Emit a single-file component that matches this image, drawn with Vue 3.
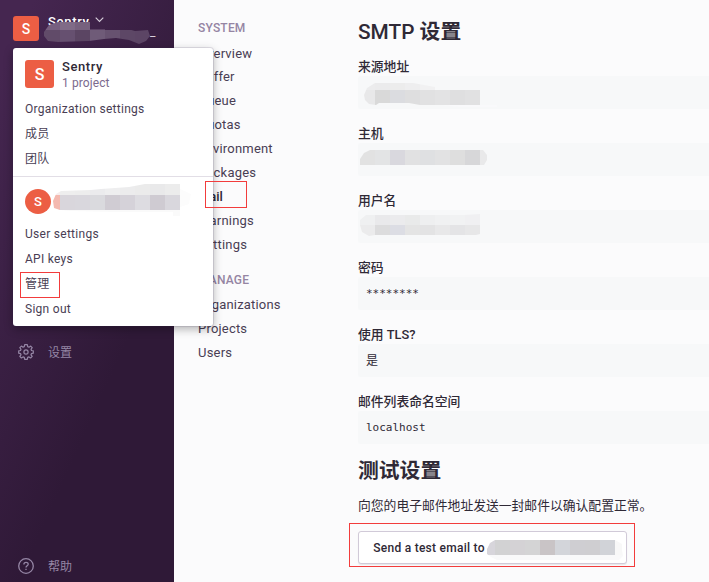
<script setup>
const system = ['Overview', 'Buffer', 'Queue', 'Quotas', 'Environment', 'Packages', 'Mail', 'Warnings', 'Settings']
const manage = ['Organizations', 'Projects', 'Users']

// Each mask: size, outline path, and mosaic cells as [x, y, width, height, fill]
const row = (y, h, x0, widths, fills) => {
  let x = x0
  return fills.map((f, i) => {
    const w = widths[i] ?? 15
    const cell = [x, y, w, h, f]
    x += w
    return cell
  })
}
const masks = {
  org: {
    w: 114, h: 24, d: 'M0 10L5 3L14 0H46V7H84L91 9L104 8L106 14L102 19L95 22L85 18L72 16L60 17L45 19L14 20L4 19L0 14Z',
    cells: [...row(0, 8, 0, [16], ['#775f80', '#806b87', '#77617e', '#5b4164']),
      ...row(8, 16, 0, [16], ['#614b69', '#665070', '#5b4563', '#6f5b78', '#675270', '#5d4766', '#5c4565'])]
  },
  user: {
    w: 140, h: 35, d: 'M0 17L3 10L8 7L38 6L48 5L76 3L92 0H127V5L138 10L136 20L127 23V32H120V28H62L18 27L7 26L1 24Z',
    cells: [...row(0, 11, 0, [7], ['#f7eded', '#eee', '#ededed', '#ebebed', '#eeeeef', '#ececed', '#ebebeb', '#e9e9ea', '#ececec', '#fcfcfc']),
      ...row(11, 15, 0, [7], ['#f4b9b0', '#d9d6dc', '#d9d7dd', '#dadade', '#d0ccd3', '#d5d2d9', '#dddce1', '#cfcbd2', '#d9d7dd', '#fcfcfc']),
      [0, 26, 140, 9, '#fafafa']]
  },
  from: {
    w: 134, h: 25, d: 'M0 12L3 5L11 0H49L71 4V7H116V22H133V24H96L78 22H56L45 20H15L12 22L5 21L1 17Z',
    cells: [...row(0, 7, 0, [11], ['#ececed', '#ebebec', '#ececec', '#eeeeef', '#f1f1f2', '#f2f2f3']),
      ...row(7, 15, 0, [11], ['#e8e8e9', '#d9d9d9', '#dbdce0', '#dededf', '#e1e1e2', '#e3e3e4', '#dfdfe0', '#e1e1e2', '#f8f8f9']),
      [0, 22, 134, 3, '#f9f9fb']]
  },
  host: {
    w: 127, h: 15, d: 'M0 15V9L4 3L10 0H123L127 5V10L124 15Z',
    cells: row(0, 15, 0, [15], ['#e2e2e2', '#e3e4e5', '#d9d8de', '#e1e1e2', '#dfe0e2', '#e2e2e3', '#dedede', '#d7d7d9', '#e9e9ea'])
  },
  name: {
    w: 120, h: 22, d: 'M0 11V6L6 1H104L120 0V20L116 21H15L9 22L2 18Z',
    cells: [...row(0, 11, 0, [15], ['#eff0f1', '#e9e9eb', '#ebebed', '#e9eaea', '#eeeff0', '#f0f1f2', '#f1f2f3', '#f0f0f2']),
      ...row(11, 11, 0, [15], ['#ebebec', '#dcdcdd', '#dcdde4', '#e4e4e4', '#e3e3e4', '#e8e8e9', '#e4e4e6', '#e7e7e8'])]
  },
  mail: {
    w: 136, h: 20, d: 'M0 9L3 3L8 0H128L135 4V10L136 16L132 20H10L4 17L0 14Z',
    cells: [...row(0, 15, 0, [8], ['#d7d5db', '#d2d2d3', '#d4d2d5', '#d4d4d5', '#c9c4c6', '#d3d5da', '#cfced2', '#cfced1', '#d1d3d8', '#f8f8f8']),
      [0, 15, 136, 5, '#f9f9fa']]
  }
}
const fields = [
  { label: '来源地址', mask: 'from' },
  { label: '主机', mask: 'host' },
  { label: '用户名', mask: 'name' },
  { label: '密码', value: '********' },
  { label: '使用 TLS?', value: '是' },
  { label: '邮件列表命名空间', value: 'localhost' }
]
</script>

<template>
  <div class="page">
    <svg class="defs" width="0" height="0">
      <clipPath v-for="(m, k) in masks" :id="'clip-' + k" :key="k"><path :d="m.d" /></clipPath>
    </svg>
    <aside class="sidebar">
      <header class="org">
        <div class="avatar org-avatar">S</div>
        <div class="org-text">
          <div class="org-name">Sentry
            <svg width="9" height="6" viewBox="0 0 9 6"><path d="M.7 .7L4.5 4.5L8.3 .7" fill="none" stroke="#d8cfdc" stroke-width="1.1" /></svg>
          </div>
          <span class="ellipsis">_</span>
          <svg class="org-mask" width="114" height="24"><g clip-path="url(#clip-org)"><rect v-for="(c, i) in masks.org.cells" :key="i" :x="c[0]" :y="c[1]" :width="c[2]" :height="c[3]" :fill="c[4]" /></g></svg>
        </div>
      </header>
      <nav class="side-links">
        <a class="side-link">
          <svg width="16" height="16" viewBox="0 0 16 16" fill="none" stroke="#9586a5" stroke-width="1.2" stroke-linejoin="round">
            <path d="M6.7 .7H9.3L9.7 2.6L11 3.2L12.7 2.1L14.2 3.7L13 5.3L13.5 6.5L15.3 6.8V9.2L13.5 9.6L13 10.8L14.2 12.4L12.6 14L11 12.9L9.7 13.4L9.3 15.3H6.7L6.3 13.4L5 12.9L3.4 14L1.8 12.4L3 10.8L2.5 9.6L.7 9.2V6.8L2.5 6.5L3 5.3L1.8 3.7L3.4 2.1L5 3.2L6.3 2.6Z" />
            <circle cx="8" cy="8" r="2.1" />
          </svg>
          <span>设置</span>
        </a>
        <a class="side-link">
          <svg width="16" height="16" viewBox="0 0 16 16" fill="none" stroke="#9586a5" stroke-width="1.3">
            <circle cx="8" cy="8" r="7.3" />
            <path d="M5.9 6.4C5.9 3.6 10.2 3.7 10.2 6.2C10.2 7.8 8 7.7 8 9.5M8 10.7V12.1" />
          </svg>
          <span>帮助</span>
        </a>
      </nav>
    </aside>

    <nav class="settings-nav">
      <h6>SYSTEM</h6>
      <a v-for="s in system" :key="s" :class="{ active: s === 'Mail' }">{{ s }}</a>
      <h6 class="second">MANAGE</h6>
      <a v-for="s in manage" :key="s">{{ s }}</a>
    </nav>

    <main class="content">
      <h2>SMTP <b>设置</b></h2>
      <section v-for="f in fields" :key="f.label" class="field">
        <label>{{ f.label }}</label>
        <div class="value" :class="f.mask">
          <svg v-if="f.mask" :width="masks[f.mask].w" :height="masks[f.mask].h"><g :clip-path="`url(#clip-${f.mask})`"><rect v-for="(c, i) in masks[f.mask].cells" :key="i" :x="c[0]" :y="c[1]" :width="c[2]" :height="c[3]" :fill="c[4]" /></g></svg>
          <span v-else>{{ f.value }}</span>
        </div>
      </section>
      <h2 class="test-title"><b>测试设置</b></h2>
      <p>向您的电子邮件地址发送一封邮件以确认配置正常。</p>
      <button class="send">
        <span>Send a test email to</span>
        <svg width="136" height="20"><g clip-path="url(#clip-mail)"><rect v-for="(c, i) in masks.mail.cells" :key="i" :x="c[0]" :y="c[1]" :width="c[2]" :height="c[3]" :fill="c[4]" /></g></svg>
      </button>
    </main>

    <div class="menu">
      <div class="menu-org">
        <div class="avatar menu-avatar">S</div>
        <div>
          <div class="menu-name">Sentry</div>
          <div class="menu-count">1 project</div>
        </div>
      </div>
      <a>Organization settings</a>
      <a>成员</a>
      <a>团队</a>
      <hr>
      <div class="menu-user">
        <div class="avatar user-avatar">S</div>
        <svg width="140" height="35"><g clip-path="url(#clip-user)"><rect v-for="(c, i) in masks.user.cells" :key="i" :x="c[0]" :y="c[1]" :width="c[2]" :height="c[3]" :fill="c[4]" /></g></svg>
      </div>
      <a>User settings</a>
      <a>API keys</a>
      <a>管理</a>
      <a>Sign out</a>
    </div>

    <div class="mark mark-mail"></div>
    <div class="mark mark-admin"></div>
    <div class="mark mark-send"></div>
  </div>
</template>

<style>
body { margin: 0; overflow: hidden; }
</style>

<style scoped>
* { box-sizing: border-box; }
.page {
  position: relative;
  display: flex;
  width: 709px;
  height: 582px;
  overflow: hidden;
  background: #fbfbfc;
  color: #2f2936;
  font-family: Roboto, "Noto Sans CJK SC", sans-serif;
}
.page svg { display: block; flex: none; }
.page .defs { position: absolute; }
h2, h6, p { margin: 0; }
.avatar {
  display: flex;
  align-items: center;
  justify-content: center;
  flex: none;
  background: #ec5e44;
  color: #fff;
  font-weight: 500;
}
.sidebar {
  display: flex;
  flex-direction: column;
  justify-content: space-between;
  flex: none;
  width: 174px;
  height: 582px;
  padding: 16px 0 6px 13px;
  background: linear-gradient(294.17deg, #2f1937 35.57%, #452650 92.42%);
}
.org { display: flex; gap: 5px; }
.org-avatar { width: 26px; height: 25px; border-radius: 3px; font-size: 14px; }
.org-text { position: relative; width: 116px; height: 26px; }
.org-name {
  display: flex;
  align-items: center;
  gap: 5px;
  height: 10px;
  padding-left: 4px;
  color: #fff;
  font-size: 13px;
  font-weight: 500;
  letter-spacing: .7px;
}
.org-name svg { margin-top: -2px; }
.ellipsis { position: absolute; left: 106px; top: 9px; color: #d8cfdc; font-size: 12px; line-height: 14px; }
.org-mask { position: absolute; left: 0; top: 6px; }
.side-links { display: flex; flex-direction: column; justify-content: space-between; height: 234px; }
.side-link { display: flex; align-items: center; gap: 14px; height: 20px; padding-left: 5px; color: #9586a5; font-size: 12px; }
.side-link span { padding-bottom: 2px; }
.settings-nav { display: flex; flex-direction: column; flex: none; width: 184px; padding: 14px 0 0 24px; }
.settings-nav h6 { height: 27px; color: #9585a3; font-size: 12px; font-weight: 500; line-height: 28px; letter-spacing: .2px; }
.settings-nav .second { margin-top: 9px; }
.settings-nav a { height: 24px; color: #493e54; font-size: 13px; line-height: 24px; letter-spacing: .2px; }
.settings-nav a:first-of-type { line-height: 26px; }
.settings-nav .active { color: #2f2936; font-weight: 500; letter-spacing: -.1px; }
.content { flex: none; width: 351px; padding-top: 19px; }
h2 { height: 26px; margin-bottom: 11px; font-size: 20.8px; font-weight: 500; line-height: 26px; }
h2 b { font-weight: 700; }
.field { height: 67px; }
.field label { display: block; height: 20px; font-size: 12.8px; font-weight: 500; line-height: 22px; }
.value {
  height: 33px;
  padding-left: 8px;
  border-radius: 2px 0 0 2px;
  background: #f7f8f9;
  font-family: "DejaVu Sans Mono", "Noto Sans CJK SC", monospace;
  font-size: 11px;
  line-height: 33px;
  display: flex;
}
.value.from { padding: 7px 0 0 6px; }
.value.host { padding: 7px 0 0 2px; }
.value.name { padding: 4px 0 0 2px; }
.field:nth-of-type(5) .value { font-size: 12px; line-height: 35px; }
.content .test-title { margin-bottom: 12px; }
p { height: 20px; margin-bottom: 15px; font-size: 12.8px; line-height: 20px; white-space: nowrap; }
.send {
  display: flex;
  align-items: center;
  width: 269px;
  height: 33px;
  padding: 0 0 0 13px;
  border: 1px solid #d1cad8;
  border-radius: 3px;
  background: #fff;
  box-shadow: 0 1px 1px rgba(0, 0, 0, .08);
  color: #2f2936;
  font: 500 12px Roboto, sans-serif;
  white-space: nowrap;
}
.send span { width: 116px; margin-left: -1px; letter-spacing: .26px; }
.send svg { margin-top: 5px; }
.menu {
  position: absolute;
  left: 13px;
  top: 48px;
  width: 200px;
  height: 278px;
  padding-top: 11px;
  border-radius: 3px;
  background: #fff;
  box-shadow: 0 0 0 1px rgba(54, 45, 89, .12), 0 3px 10px rgba(0, 0, 0, .3);
}
.menu-org { display: flex; gap: 8px; height: 38px; padding-left: 12px; }
.menu-avatar { width: 29px; height: 28px; margin-top: 1px; border-radius: 3px; font-size: 16px; }
.menu-name { height: 16px; font-size: 13px; font-weight: 500; line-height: 16px; letter-spacing: .6px; }
.menu-count { height: 16px; color: #7c6a8e; font-size: 12px; line-height: 16px; letter-spacing: .1px; }
.menu a { display: block; height: 25px; padding-left: 12px; color: #493e54; font-size: 12px; line-height: 25px; letter-spacing: .28px; }
.menu hr { height: 1px; margin: 4px 0 0; border: 0; background: #e2dee6; }
.menu-user { display: flex; height: 45px; padding-left: 12px; }
.user-avatar { width: 26px; height: 25px; margin-top: 12px; border-radius: 50%; font-size: 13px; }
.menu-user svg { margin: 7px 0 0 2px; }
.mark { position: absolute; border: 1px solid #f23c3c; }
.mark-mail { left: 205px; top: 181px; width: 42px; height: 27px; }
.mark-admin { left: 20px; top: 272px; width: 40px; height: 26px; }
.mark-send { left: 349px; top: 523px; width: 286px; height: 44px; }
</style>
